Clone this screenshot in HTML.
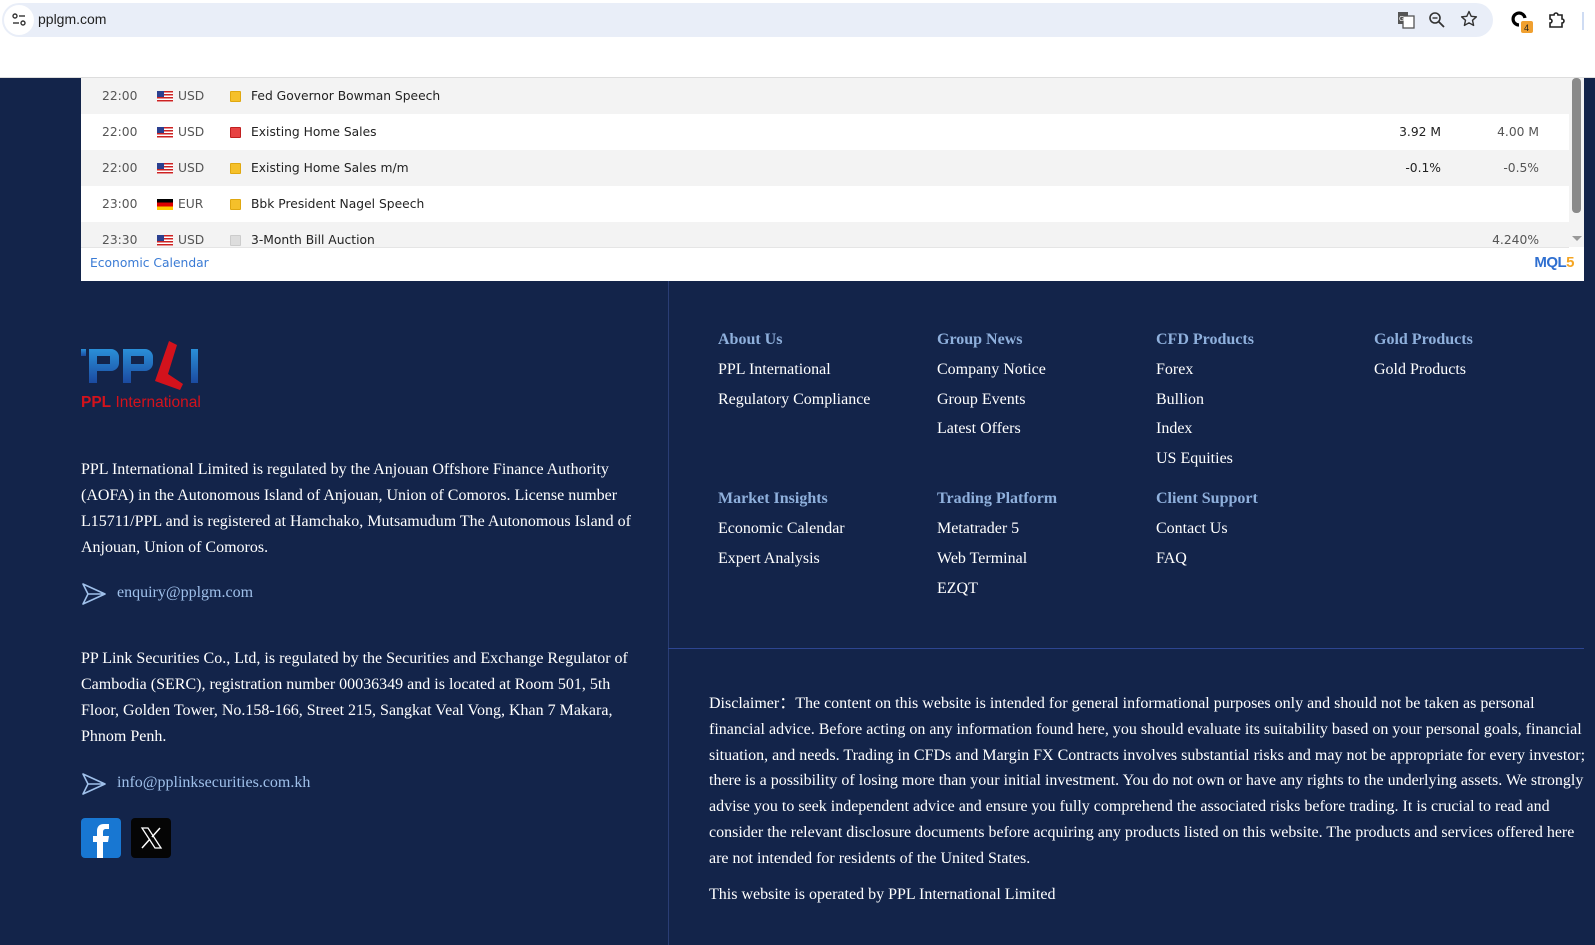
<!DOCTYPE html>
<html><head><meta charset="utf-8">
<style>
*{margin:0;padding:0;box-sizing:border-box}
body{width:1595px;height:945px;overflow:hidden;background:#13244a;position:relative;font-family:"Liberation Serif",serif;}
.top{position:absolute;left:0;top:0;width:1595px;height:78px;background:#fff;}
.addr{position:absolute;left:2px;top:3px;width:1491px;height:34px;background:#e9eef8;border-radius:17px;}
.addr .tune{position:absolute;left:2px;top:2px;width:30px;height:30px;border-radius:15px;background:#fff;}
.addr .url{position:absolute;left:36px;top:8px;font:14px "Liberation Sans",sans-serif;color:#1f1f1f;}
.ico{position:absolute;}
.widget{position:absolute;left:81px;top:78px;width:1503px;height:203px;background:#fff;}
.row{position:absolute;left:0;width:1488px;height:36px;font:12.3px "DejaVu Sans","Liberation Sans",sans-serif;color:#222;}
.row span{position:absolute;top:11px;white-space:nowrap}
.row .t{left:21px;color:#555}
.row .f{left:76px;top:13px;width:16px;height:11px}
.row .c{left:97px;color:#555}
.row .i{left:149px;top:13px;width:11px;height:11px;border-radius:1px}
.row .n{left:170px}
.row .a{right:128px;text-align:right}
.row .p{right:30px;text-align:right;color:#555}
.g{background:#f3f3f3}
.us{background:repeating-linear-gradient(#c22 0 1.5px,#fff 1.5px 3px)}
.us:before{content:"";position:absolute;left:0;top:0;width:7px;height:6px;background:#2b3f8f}
.de{background:linear-gradient(#000 0 33%,#d00 33% 66%,#fc0 66%)}
.lt{position:absolute;color:#fff;font-size:16px;line-height:26px;white-space:nowrap}
.nav{position:absolute;font-size:16px;color:#fff;white-space:nowrap}
.nav.h{color:#8fb0dc;font-weight:bold}
.mail{position:absolute;color:#9fc0ea;font-size:16px}
</style></head><body>
<div class="top">
  <div class="addr"><div class="tune">
    <svg width="30" height="30" viewBox="0 0 30 30"><circle cx="11" cy="11" r="2" fill="none" stroke="#333" stroke-width="1.4"/><line x1="15" y1="11" x2="21" y2="11" stroke="#333" stroke-width="1.4"/><circle cx="19" cy="18" r="2" fill="none" stroke="#333" stroke-width="1.4"/><line x1="9" y1="18" x2="15" y2="18" stroke="#333" stroke-width="1.4"/></svg>
  </div><div class="url">pplgm.com</div></div>
  <svg class="ico" style="left:1397px;top:11px" width="18" height="18" viewBox="0 0 18 18"><rect x="1" y="1" width="10" height="12" fill="#555"/><rect x="6" y="5" width="11" height="12" fill="#fff" stroke="#555" stroke-width="1.3"/><text x="2" y="10" font-size="7" fill="#fff" font-family="Liberation Sans">G</text></svg>
  <svg class="ico" style="left:1428px;top:11px" width="18" height="18" viewBox="0 0 18 18"><circle cx="7" cy="7" r="5" fill="none" stroke="#333" stroke-width="1.6"/><line x1="11" y1="11" x2="16" y2="16" stroke="#333" stroke-width="1.8"/><line x1="4.5" y1="7" x2="9.5" y2="7" stroke="#333" stroke-width="1.4"/></svg>
  <svg class="ico" style="left:1460px;top:10px" width="18" height="18" viewBox="0 0 18 18"><path d="M9 1.5l2.2 4.8 5.2.5-3.9 3.5 1.1 5.1L9 12.8l-4.6 2.6 1.1-5.1L1.6 6.8l5.2-.5z" fill="none" stroke="#333" stroke-width="1.4" stroke-linejoin="round"/></svg>
  <svg class="ico" style="left:1510px;top:10px" width="24" height="24" viewBox="0 0 24 24"><path d="M15 8A6 6 0 1 0 9 15" fill="none" stroke="#000" stroke-width="3.2"/><rect x="11" y="11" width="12" height="12" rx="2" fill="#f0a030"/><text x="14" y="21" font-size="9" font-family="Liberation Sans" fill="#222">4</text></svg>
  <svg class="ico" style="left:1547px;top:10px" width="20" height="20" viewBox="0 0 20 20"><path d="M3 5h4a2 2 0 0 1 4 0h4v4a2 2 0 0 1 0 4v4H3v-4a2 2 0 0 0 0-4z" fill="none" stroke="#222" stroke-width="1.6"/></svg>
  <div style="position:absolute;left:1582px;top:12px;width:2px;height:18px;background:#cfdcf3"></div>
  <div style="position:absolute;left:0;top:77px;width:1595px;height:1px;background:#ddd"></div>
</div>

<div class="widget">
  <div class="row g" style="top:0"><span class="t">22:00</span><span class="f us"></span><span class="c">USD</span><span class="i" style="background:#f5c02a;border:1px solid #e0a810"></span><span class="n">Fed Governor Bowman Speech</span></div>
  <div class="row" style="top:36px"><span class="t">22:00</span><span class="f us"></span><span class="c">USD</span><span class="i" style="background:#e74242;border:1px solid #c02020"></span><span class="n">Existing Home Sales</span><span class="a">3.92 M</span><span class="p">4.00 M</span></div>
  <div class="row g" style="top:72px"><span class="t">22:00</span><span class="f us"></span><span class="c">USD</span><span class="i" style="background:#f5c02a;border:1px solid #e0a810"></span><span class="n">Existing Home Sales m/m</span><span class="a">-0.1%</span><span class="p">-0.5%</span></div>
  <div class="row" style="top:108px"><span class="t">23:00</span><span class="f de"></span><span class="c">EUR</span><span class="i" style="background:#f5c02a;border:1px solid #e0a810"></span><span class="n">Bbk President Nagel Speech</span></div>
  <div class="row g" style="top:144px;height:25px;overflow:hidden"><span class="t">23:30</span><span class="f us"></span><span class="c">USD</span><span class="i" style="background:#ddd;border:1px solid #ccc"></span><span class="n">3-Month Bill Auction</span><span class="p">4.240%</span></div>
  <div style="position:absolute;left:0;top:169px;width:1488px;height:1px;background:#e5e5e5"></div>
  <div style="position:absolute;left:1488px;top:0;width:15px;height:169px;background:#f3f3f3"></div>
  <div style="position:absolute;left:1491px;top:0;width:9px;height:135px;background:#8a8a8a;border-radius:4px"></div>
  <div style="position:absolute;left:1491px;top:158px;width:0;height:0;border-left:5px solid transparent;border-right:5px solid transparent;border-top:5px solid #999"></div>
  <div style="position:absolute;left:9px;top:178px;font:12.3px 'DejaVu Sans','Liberation Sans',sans-serif;color:#3a7bd5">Economic Calendar</div>
  <div style="position:absolute;right:10px;top:176px;font:bold 15px 'Liberation Sans',sans-serif;color:#2f6fd0;letter-spacing:-0.5px">MQL<span style="color:#f5a623">5</span></div>
</div>

<div style="position:absolute;left:668px;top:281px;width:1px;height:664px;background:#2a3d74"></div>
<div style="position:absolute;left:668px;top:648px;width:916px;height:1px;background:#2d4591"></div>

<svg style="position:absolute;left:81px;top:341px" width="124" height="72" viewBox="0 0 124 72">
  <defs><linearGradient id="bl" x1="0" y1="0" x2="0" y2="1"><stop offset="0" stop-color="#2a8fd8"/><stop offset="1" stop-color="#1b4aa0"/></linearGradient></defs>
  <rect x="0" y="8" width="5" height="7" fill="url(#bl)"/>
  <path d="M8 8h22a8 8 0 0 1 8 8v6a8 8 0 0 1-8 8H16v12H8z M16 15v8h13v-8z" fill="url(#bl)" fill-rule="evenodd"/>
  <path d="M42 8h22a8 8 0 0 1 8 8v6a8 8 0 0 1-8 8H50v12h-8z M50 15v8h13v-8z" fill="url(#bl)" fill-rule="evenodd"/>
  <path d="M88 0l8 4-9 29 15 10-3 6-25-9z" fill="#d3121c"/>
  <rect x="110" y="8" width="7" height="34" fill="url(#bl)"/>
  <text x="0" y="66" font-family="Liberation Sans" font-size="15.5" fill="#d3121c"><tspan font-weight="bold">PPL</tspan> International</text>
</svg>

<div class="lt" style="left:81px;top:457px">PPL International Limited is regulated by the Anjouan Offshore Finance Authority<br>(AOFA) in the Autonomous Island of Anjouan, Union of Comoros. License number<br>L15711/PPL and is registered at Hamchako, Mutsamudum The Autonomous Island of<br>Anjouan, Union of Comoros.</div>

<svg style="position:absolute;left:81px;top:582px" width="26" height="24" viewBox="0 0 26 24"><path d="M2 2l22 10L2 22l5-10z M7 12h17" fill="none" stroke="#9fc0ea" stroke-width="1.6" stroke-linejoin="round"/></svg>
<div class="mail" style="left:117px;top:584px">enquiry@pplgm.com</div>

<div class="lt" style="left:81px;top:646px">PP Link Securities Co., Ltd, is regulated by the Securities and Exchange Regulator of<br>Cambodia (SERC), registration number 00036349 and is located at Room 501, 5th<br>Floor, Golden Tower, No.158-166, Street 215, Sangkat Veal Vong, Khan 7 Makara,<br>Phnom Penh.</div>

<svg style="position:absolute;left:81px;top:772px" width="26" height="24" viewBox="0 0 26 24"><path d="M2 2l22 10L2 22l5-10z M7 12h17" fill="none" stroke="#9fc0ea" stroke-width="1.6" stroke-linejoin="round"/></svg>
<div class="mail" style="left:117px;top:774px">info@pplinksecurities.com.kh</div>

<svg style="position:absolute;left:81px;top:818px" width="40" height="40" viewBox="0 0 40 40"><rect width="40" height="40" rx="4" fill="#1877d2"/><path d="M22 40V24h5l1-6h-6v-4c0-2 1-3 3-3h3V6h-5c-5 0-7 3-7 7v5h-4v6h4v16z" fill="#fff"/></svg>
<svg style="position:absolute;left:131px;top:818px" width="40" height="40" viewBox="0 0 40 40"><rect width="40" height="40" rx="4" fill="#050505"/><path d="M11 10h6l13 20h-6z" fill="none" stroke="#fff" stroke-width="1.3"/><path d="M29 10L21 19M19 21l-8 9" stroke="#fff" stroke-width="1.5"/></svg>

<div class="nav h" style="left:718px;top:331px">About Us</div>
<div class="nav" style="left:718px;top:361px">PPL International</div>
<div class="nav" style="left:718px;top:391px">Regulatory Compliance</div>
<div class="nav h" style="left:937px;top:331px">Group News</div>
<div class="nav" style="left:937px;top:361px">Company Notice</div>
<div class="nav" style="left:937px;top:391px">Group Events</div>
<div class="nav" style="left:937px;top:420px">Latest Offers</div>
<div class="nav h" style="left:1156px;top:331px">CFD Products</div>
<div class="nav" style="left:1156px;top:361px">Forex</div>
<div class="nav" style="left:1156px;top:391px">Bullion</div>
<div class="nav" style="left:1156px;top:420px">Index</div>
<div class="nav" style="left:1156px;top:450px">US Equities</div>
<div class="nav h" style="left:1374px;top:331px">Gold Products</div>
<div class="nav" style="left:1374px;top:361px">Gold Products</div>
<div class="nav h" style="left:718px;top:490px">Market Insights</div>
<div class="nav" style="left:718px;top:520px">Economic Calendar</div>
<div class="nav" style="left:718px;top:550px">Expert Analysis</div>
<div class="nav h" style="left:937px;top:490px">Trading Platform</div>
<div class="nav" style="left:937px;top:520px">Metatrader 5</div>
<div class="nav" style="left:937px;top:550px">Web Terminal</div>
<div class="nav" style="left:937px;top:580px">EZQT</div>
<div class="nav h" style="left:1156px;top:490px">Client Support</div>
<div class="nav" style="left:1156px;top:520px">Contact Us</div>
<div class="nav" style="left:1156px;top:550px">FAQ</div>

<div class="lt" style="left:709px;top:691px;line-height:25.8px">Disclaimer：The content on this website is intended for general informational purposes only and should not be taken as personal<br>financial advice. Before acting on any information found here, you should evaluate its suitability based on your personal goals, financial<br>situation, and needs. Trading in CFDs and Margin FX Contracts involves substantial risks and may not be appropriate for every investor;<br>there is a possibility of losing more than your initial investment. You do not own or have any rights to the underlying assets. We strongly<br>advise you to seek independent advice and ensure you fully comprehend the associated risks before trading. It is crucial to read and<br>consider the relevant disclosure documents before acquiring any products listed on this website. The products and services offered here<br>are not intended for residents of the United States.</div>
<div class="lt" style="left:709px;top:882px">This website is operated by PPL International Limited</div>
</body></html>
